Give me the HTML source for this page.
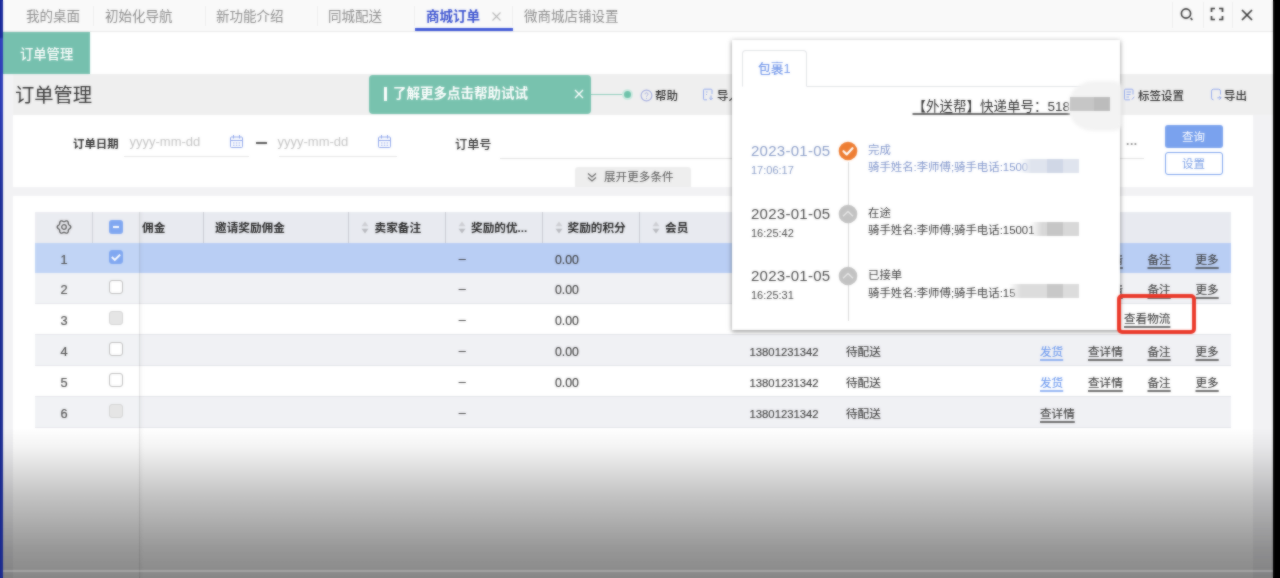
<!DOCTYPE html>
<html lang="zh-CN">
<head>
<meta charset="utf-8">
<title>订单管理</title>
<style>
*{box-sizing:border-box;margin:0;padding:0}
html,body{width:1280px;height:578px;overflow:hidden;background:#f2f2f4}
body{position:relative;font-family:"Liberation Sans","Noto Sans CJK SC",sans-serif;font-size:12px;color:#333}
#root{position:absolute;left:0;top:0;width:1280px;height:578px;overflow:hidden;will-change:transform}
#soft{position:absolute;left:0;top:0;width:1280px;height:578px;-webkit-backdrop-filter:blur(1px);backdrop-filter:blur(1px);opacity:.6;pointer-events:none}
#in{position:absolute;left:0;top:0;width:1280px;height:578px}
.abs{position:absolute}
.t{position:absolute;white-space:nowrap;line-height:16px;height:16px}
i{display:block}
#topbg{left:-20px;top:-20px;width:1320px;height:52px;background:#f9f9f9;border-bottom:1px solid #e9e9e9}
#topbar{left:0;top:0;width:1280px;height:32px}
#topbar .t{top:8.8px;font-size:13.5px;color:#8c8c8c}
.sep{position:absolute;top:6px;width:1px;height:20px;background:#ededed}
#row2{left:-20px;top:32px;width:1320px;height:42px;background:#fff}
#gtab{left:3px;top:32px;width:87px;height:42px;background:#76c0ae}
#titlebar{left:12.5px;top:74px;width:1290px;height:41px;background:#efefef}
.tb{font-size:11.5px;color:#2c2c2c;font-weight:500;top:87.5px}
#filter{left:13px;top:115px;width:1240px;height:72px;background:#fff}
#tpanel{left:13px;top:196px;width:1240px;height:402px;background:#fff}
#thead{left:35px;top:212px;width:1196px;height:31px;background:#e8eaf0}
.row{position:absolute;left:35px;width:1196px;height:30.8px;border-bottom:1px solid #e2e3e8}
.row .t{top:8.5px;font-size:11.6px;color:#3a3a3a;-webkit-text-stroke:.12px currentColor}
.row .n{font-size:12.8px;left:0;width:58px;text-align:center;color:#383838;top:8.7px;-webkit-text-stroke:.22px currentColor}
.row .num{font-size:12.3px}
.hd{position:absolute;top:219.5px;font-size:11.65px;font-weight:bold;color:#2a2a2a;white-space:nowrap;line-height:16px}
.vs{position:absolute;top:212px;width:1px;height:31px;background:#c9cbd3}
.lnk{text-decoration:underline;text-decoration-thickness:1.5px;text-underline-offset:2.5px;text-decoration-color:rgba(60,60,60,.75)}
.blue{color:#6b98ee !important;text-decoration-color:rgba(120,160,240,.8) !important}
.cb{position:absolute;left:74px;top:7px;width:14px;height:14px;border:1.2px solid #b4b4b4;border-radius:3px;background:#fff}
.cb.dis{background:#e2e2e2;border-color:#cfcfcf}
.cb.on{background:#6f9bf0;border-color:#6f9bf0}
#popup{left:732px;top:40px;width:388px;height:290px;background:#fff;box-shadow:0 1px 5px rgba(0,0,0,.36),0 2px 3px rgba(0,0,0,.14)}
.tl .d{font-size:15px;color:#555;left:751px;letter-spacing:.27px}
.tl .h{font-size:11px;color:#555;left:751px}
.tl .c{font-size:11.4px;color:#444;left:868px}
.blk{position:absolute;height:14px;filter:blur(.6px)}
</style>
</head>
<body>
<div id="root"><div id="in">
<div class="abs" id="topbg"></div>
<div class="abs" id="topbar">
  <span class="t" style="left:26px">我的桌面</span>
  <span class="t" style="left:105px">初始化导航</span>
  <span class="t" style="left:216px">新功能介绍</span>
  <span class="t" style="left:328px">同城配送</span>
  <span class="t" style="left:426px;color:#3a52d0;font-weight:bold">商城订单</span>
  <svg class="abs" style="left:491px;top:11px" width="11" height="11" viewBox="0 0 11 11"><path d="M1.5 1.5l8 8M9.5 1.5l-8 8" fill="none" stroke="#b8b8b8" stroke-width="1.1"/></svg>
  <span class="t" style="left:524px">微商城店铺设置</span>
  <i class="sep" style="left:93px"></i><i class="sep" style="left:205px"></i><i class="sep" style="left:317px"></i><i class="sep" style="left:414px"></i><i class="sep" style="left:512px"></i>
  <i class="abs" style="left:415px;top:28px;width:98px;height:3px;background:#3f58d8"></i>
  <i class="sep" style="left:1172px;top:2px;height:26px"></i><i class="sep" style="left:1203px;top:2px;height:26px"></i><i class="sep" style="left:1232px;top:2px;height:26px"></i>
  <svg class="abs" style="left:1178px;top:6px" width="18" height="18" viewBox="0 0 18 18"><circle cx="8" cy="7.5" r="4.6" fill="none" stroke="#3a3a3a" stroke-width="1.6"/><path d="M12.6 12.2l1.8 1.6" stroke="#3a3a3a" stroke-width="1.7" fill="none"/></svg>
  <svg class="abs" style="left:1209px;top:6px" width="16" height="16" viewBox="0 0 16 16"><path d="M2.5 6V2.5H6M10 2.5h3.5V6M13.5 10v3.5H10M6 13.500H2.500V10" fill="none" stroke="#3a3a3a" stroke-width="1.7"/></svg>
  <svg class="abs" style="left:1240px;top:7.500px" width="14" height="14" viewBox="0 0 14 14"><path d="M2 2l10 10M12 2L2 12" fill="none" stroke="#3a3a3a" stroke-width="1.7"/></svg>
</div>
<div class="abs" id="row2"></div>
<div class="abs" id="gtab"><span class="t" style="left:17px;top:14.500px;font-size:13.3px;color:#fff;font-weight:500">订单管理</span></div>
<div class="abs" id="titlebar"></div>
<span class="t" style="left:15px;top:83.700px;font-size:19.3px;line-height:24px;height:24px;color:#333">订单管理</span>
<div class="abs" style="left:369px;top:75px;width:222px;height:39px;background:#78c2ae;border-radius:4px">
  <i class="abs" style="left:15px;top:11.500px;width:3px;height:14px;background:#fff"></i>
  <span class="t" style="left:24px;top:11px;font-size:13.5px;color:#fff;font-weight:bold">了解更多点击帮助试试</span>
  <svg class="abs" style="left:205px;top:14px" width="10" height="10" viewBox="0 0 10 10"><path d="M1 1l8 8M9 1L1 9" fill="none" stroke="#fff" stroke-width="1.4"/></svg>
</div>
<i class="abs" style="left:591px;top:94px;width:32px;height:1px;background:#8fcdbb"></i>
<i class="abs" style="left:621.5px;top:89px;width:11px;height:11px;border-radius:50%;background:#cfeae2"></i>
<i class="abs" style="left:623.5px;top:91px;width:7px;height:7px;border-radius:50%;background:#6fc2aa"></i>
<div id="tbitems">
  <svg class="abs" style="left:639.500px;top:88.500px" width="13" height="13" viewBox="0 0 13 13"><circle cx="6.5" cy="6.5" r="5.400" fill="none" stroke="#a3acdf" stroke-width="1.100"/><path d="M5 5.300c0-2 3-2 3 0 0 1-1.500 1.200-1.500 2.400M6.500 8.900v.9" fill="none" stroke="#a3acdf" stroke-width="1"/></svg>
  <span class="t tb" style="left:655px">帮助</span>
  <svg class="abs" style="left:702px;top:88px" width="12" height="13" viewBox="0 0 12 13"><path d="M10 6V2.200a1 1 0 0 0-1-1H2.500a1 1 0 0 0-1 1v8.600a1 1 0 0 0 1 1H5" fill="none" stroke="#93a9ee" stroke-width="1"/><path d="M4 4h1.500M4 6.500h1M9 7.500v4M7.300 10l1.700 1.700 1.700-1.700" fill="none" stroke="#93a9ee" stroke-width="1"/></svg>
  <span class="t tb" style="left:717px">导入</span>
  <svg class="abs" style="left:1123px;top:88px" width="13" height="13" viewBox="0 0 13 13"><path d="M10 6.500V2.200a1 1 0 0 0-1-1H2.500a1 1 0 0 0-1 1v8.600a1 1 0 0 0 1 1H7" fill="none" stroke="#93a9ee" stroke-width="1"/><path d="M3.500 4h4.500M3.500 6.500h4M3.500 9h2.500M9 11.500l2.200-2.700" fill="none" stroke="#93a9ee" stroke-width="1"/></svg>
  <span class="t tb" style="left:1138px">标签设置</span>
  <svg class="abs" style="left:1210px;top:88px" width="13" height="13" viewBox="0 0 13 13"><path d="M3.500 11.800a2 2 0 0 1-2-2V3.200a2 2 0 0 1 2-2h5a2 2 0 0 1 2 2V6.500" fill="none" stroke="#93a9ee" stroke-width="1"/><path d="M7.300 9.800h3.700M9.300 8l1.800 1.800-1.800 1.800" fill="none" stroke="#93a9ee" stroke-width="1"/></svg>
  <span class="t tb" style="left:1224px">导出</span>
</div>
<div class="abs" id="filter"></div>
<span class="t" style="left:73px;top:136px;font-size:11.4px;font-weight:bold;color:#333">订单日期</span>
<span class="t" style="left:129.500px;top:134px;font-size:13px;color:#c4c4c4">yyyy-mm-dd</span>
<svg class="abs" style="left:228.500px;top:134px" width="15" height="15" viewBox="0 0 15 15"><rect x="1.5" y="3" width="12" height="10.5" rx="1" fill="none" stroke="#8ea6ea" stroke-width="1"/><path d="M4.500 1v3.500M10.500 1v3.500M1.500 6.500h12M4 9h1.500M6.800 9h1.500M9.600 9h1.500M4 11.200h1.500M6.800 11.200h1.500M9.600 11.200h1.500" fill="none" stroke="#8ea6ea" stroke-width="1"/></svg>
<i class="abs" style="left:124px;top:156px;width:125px;height:1px;background:#e6e6e6"></i>
<i class="abs" style="left:256px;top:142px;width:11px;height:2px;background:#555"></i>
<span class="t" style="left:277.500px;top:134px;font-size:13px;color:#c4c4c4">yyyy-mm-dd</span>
<svg class="abs" style="left:377px;top:134px" width="15" height="15" viewBox="0 0 15 15"><rect x="1.5" y="3" width="12" height="10.5" rx="1" fill="none" stroke="#8ea6ea" stroke-width="1"/><path d="M4.500 1v3.500M10.500 1v3.500M1.500 6.500h12M4 9h1.500M6.800 9h1.500M9.600 9h1.500M4 11.200h1.500M6.800 11.200h1.500M9.600 11.200h1.500" fill="none" stroke="#8ea6ea" stroke-width="1"/></svg>
<i class="abs" style="left:279px;top:156px;width:118px;height:1px;background:#e6e6e6"></i>
<span class="t" style="left:455px;top:136.500px;font-size:12.2px;font-weight:500;color:#333">订单号</span>
<i class="abs" style="left:500px;top:158px;width:644px;height:1px;background:#e0e0e0"></i>
<span class="t" style="left:1126px;top:132.500px;font-size:12px;color:#8a8a8a;letter-spacing:.6px;font-weight:bold">...</span>
<div class="abs" style="left:575px;top:167px;width:116px;height:20px;background:#eeeeee;border-radius:3px 3px 0 0">
  <svg class="abs" style="left:11px;top:4px" width="12" height="12" viewBox="0 0 12 12"><path d="M2 2.500l4 3.500 4-3.500M2 6.500l4 3.500 4-3.500" fill="none" stroke="#666" stroke-width="1.1"/></svg>
  <span class="t" style="left:29px;top:2px;font-size:11.6px;color:#555">展开更多条件</span>
</div>
<div class="abs" style="left:1164.500px;top:124.500px;width:58px;height:23px;background:#7aa2ee;border-radius:3px"><span class="t" style="left:0;width:58px;text-align:center;top:4.500px;font-size:11.5px;color:#fff">查询</span></div>
<div class="abs" style="left:1164.500px;top:151.500px;width:58px;height:23px;background:#fff;border:1px solid #7aa2ee;border-radius:3px"><span class="t" style="left:-1px;width:58px;text-align:center;top:3.500px;font-size:11.5px;color:#7a9fe6">设置</span></div>
<div class="abs" id="tpanel"></div>
<div class="abs" id="thead"></div>
<i class="vs" style="left:92px"></i><i class="vs" style="left:203px"></i><i class="vs" style="left:348px"></i><i class="vs" style="left:445px"></i><i class="vs" style="left:542px"></i><i class="vs" style="left:639px"></i>
<svg class="abs" style="left:55.500px;top:219px" width="16" height="16" viewBox="0 0 16 16" overflow="visible"><path d="M14.75 8.00L14.62 8.59L14.28 9.13L13.80 9.58L13.29 9.96L12.85 10.31L12.55 10.68L12.38 11.13L12.31 11.69L12.24 12.33L12.10 12.98L11.81 13.56L11.38 13.96L10.81 14.15L10.18 14.11L9.55 13.91L8.98 13.65L8.47 13.44L8.00 13.36L7.53 13.44L7.02 13.65L6.45 13.91L5.82 14.11L5.19 14.15L4.63 13.96L4.19 13.56L3.90 12.98L3.76 12.33L3.69 11.69L3.62 11.13L3.45 10.68L3.15 10.31L2.71 9.96L2.20 9.58L1.72 9.13L1.38 8.59L1.25 8.00L1.38 7.41L1.72 6.87L2.20 6.42L2.71 6.04L3.15 5.69L3.45 5.32L3.62 4.87L3.69 4.31L3.76 3.67L3.90 3.02L4.19 2.44L4.62 2.04L5.19 1.85L5.82 1.89L6.45 2.09L7.02 2.35L7.53 2.56L8.00 2.64L8.47 2.56L8.98 2.35L9.55 2.09L10.18 1.89L10.81 1.85L11.37 2.04L11.81 2.44L12.10 3.02L12.24 3.67L12.31 4.31L12.38 4.87L12.55 5.32L12.85 5.69L13.29 6.04L13.80 6.42L14.28 6.87L14.62 7.41Z" fill="none" stroke="#444" stroke-width="1.400" stroke-linejoin="round"/><circle cx="8" cy="8" r="2.300" fill="none" stroke="#444" stroke-width="1.300"/></svg>
<div class="abs" style="left:109px;top:220px;width:13.5px;height:13.5px;background:#6f9bf0;border-radius:3px"><i class="abs" style="left:3.500px;top:6px;width:6.5px;height:1.8px;background:#fff"></i></div>
<span class="hd" style="left:142px">佣金</span><span class="hd" style="left:215px">邀请奖励佣金</span><svg class="abs" style="left:360.5px;top:221px" width="8" height="13" viewBox="0 0 8 13"><path d="M4 .5L7.500 5.300H.5z" fill="#cdced3"/><path d="M4 12.500L7.500 7.700H.5z" fill="#b9babf"/></svg><span class="hd" style="left:374.500px">卖家备注</span><svg class="abs" style="left:457.5px;top:221px" width="8" height="13" viewBox="0 0 8 13"><path d="M4 .5L7.500 5.300H.5z" fill="#cdced3"/><path d="M4 12.500L7.500 7.700H.5z" fill="#b9babf"/></svg><span class="hd" style="left:471px">奖励的优...</span><svg class="abs" style="left:554.5px;top:221px" width="8" height="13" viewBox="0 0 8 13"><path d="M4 .5L7.500 5.300H.5z" fill="#cdced3"/><path d="M4 12.500L7.500 7.700H.5z" fill="#b9babf"/></svg><span class="hd" style="left:567.500px">奖励的积分</span><svg class="abs" style="left:651.5px;top:221px" width="8" height="13" viewBox="0 0 8 13"><path d="M4 .5L7.500 5.300H.5z" fill="#cdced3"/><path d="M4 12.500L7.500 7.700H.5z" fill="#b9babf"/></svg><span class="hd" style="left:665px">会员</span>
<div class="row" style="top:243.0px;height:30.0px;background:#b9cef4;border-bottom-color:#b9cef4"><span class="t n">1</span><i class="cb on"><svg class="abs" style="left:0;top:0" width="12" height="12" viewBox="0 0 12 12"><path d="M1.800 6l3 3 5.400-5.400" fill="none" stroke="#fff" stroke-width="1.9"/></svg></i><span class="t" style="left:423.700px;top:7.600px;font-size:12.5px">–</span><span class="t num" style="left:520px">0.00</span><span class="t lnk" style="left:1053px">查详情</span><span class="t lnk" style="left:1112.500px">备注</span><span class="t lnk" style="left:1160.500px">更多</span></div>
<div class="row" style="top:273.0px;height:31.0px;background:#f0f1f4;border-bottom-color:#e2e3e8"><span class="t n">2</span><i class="cb"></i><span class="t" style="left:423.700px;top:7.600px;font-size:12.5px">–</span><span class="t num" style="left:520px">0.00</span><span class="t lnk" style="left:1053px">查详情</span><span class="t lnk" style="left:1112.500px">备注</span><span class="t lnk" style="left:1160.500px">更多</span></div>
<div class="row" style="top:304.0px;height:31.0px;background:#ffffff;border-bottom-color:#e2e3e8"><span class="t n">3</span><i class="cb dis"></i><span class="t" style="left:423.700px;top:7.600px;font-size:12.5px">–</span><span class="t num" style="left:520px">0.00</span><span class="t lnk" style="left:1089px;top:6.500px">查看物流</span></div>
<div class="row" style="top:335.0px;height:31.0px;background:#f0f1f4;border-bottom-color:#e2e3e8"><span class="t n">4</span><i class="cb"></i><span class="t" style="left:423.700px;top:7.600px;font-size:12.5px">–</span><span class="t num" style="left:520px">0.00</span><span class="t" style="left:714.500px;font-size:11.3px">13801231342</span><span class="t" style="left:811px">待配送</span><span class="t lnk blue" style="left:1005px">发货</span><span class="t lnk" style="left:1053px">查详情</span><span class="t lnk" style="left:1112.500px">备注</span><span class="t lnk" style="left:1160.500px">更多</span></div>
<div class="row" style="top:366.0px;height:31.0px;background:#ffffff;border-bottom-color:#e2e3e8"><span class="t n">5</span><i class="cb"></i><span class="t" style="left:423.700px;top:7.600px;font-size:12.5px">–</span><span class="t num" style="left:520px">0.00</span><span class="t" style="left:714.500px;font-size:11.3px">13801231342</span><span class="t" style="left:811px">待配送</span><span class="t lnk blue" style="left:1005px">发货</span><span class="t lnk" style="left:1053px">查详情</span><span class="t lnk" style="left:1112.500px">备注</span><span class="t lnk" style="left:1160.500px">更多</span></div>
<div class="row" style="top:397.0px;height:31.0px;background:#f0f1f4;border-bottom-color:#e2e3e8"><span class="t n">6</span><i class="cb dis"></i><span class="t" style="left:423.700px;top:7.600px;font-size:12.5px">–</span><span class="t" style="left:714.500px;font-size:11.3px">13801231342</span><span class="t" style="left:811px">待配送</span><span class="t lnk" style="left:1005px">查详情</span></div>
<i class="abs" style="left:35px;top:212px;width:104.500px;height:216px;background:rgba(255,255,255,.12)"></i>
<i class="abs" style="left:139.500px;top:212px;width:4px;height:386px;background:linear-gradient(to right,rgba(0,0,0,.03),rgba(0,0,0,0))"></i>
<i class="abs" style="left:139px;top:212px;width:1px;height:386px;background:rgba(0,0,0,.1)"></i>
<div class="abs" id="popup"></div>
<i class="abs" style="left:742px;top:86px;width:339px;height:1.300px;background:#e2e3e6"></i>
<div class="abs" style="left:742px;top:50px;width:64.500px;height:37px;border:1px solid #e2e3e6;border-bottom:1px solid #fff;border-radius:4px 4px 0 0;background:#fff"><span class="t" style="left:-1px;width:64.500px;text-align:center;top:9.500px;font-size:12.8px;color:#7599ea;font-weight:500">包裹1</span></div>
<span class="t" style="left:912.500px;top:99.300px;font-size:13.5px;color:#333;text-decoration:underline;text-decoration-thickness:1.5px;text-decoration-color:rgba(40,40,40,.7);text-underline-offset:2px;white-space:pre">【外送帮】快递单号：518</span>
<i class="abs" style="left:1068px;top:81px;width:54px;height:50px;border-radius:25px 8px 8px 25px;background:#f3f3f3;filter:blur(1.5px)"></i>
<i class="blk" style="left:1070px;top:97px;width:40px;background:#c6c6c6"></i>
<i class="blk" style="left:1094px;top:97px;width:16px;background:#bcbcbc"></i>
<i class="abs" style="left:848px;top:162px;width:1px;height:159px;background:#d9d9d9"></i>
<div class="tl"><span class="t d" style="top:140.9px;color:#8a9dc8;line-height:20px;height:20px">2023-01-05</span><span class="t h" style="top:161.7px;color:#8a9dc8">17:06:17</span><svg class="abs" style="left:838.0px;top:140.5px" width="20" height="20" viewBox="0 0 20 20"><circle cx="10" cy="10" r="9.300" fill="#ee7d32"/><path d="M5.500 10.200l3.200 3.200 5.800-6.200" fill="none" stroke="#fff" stroke-width="2.200" stroke-linecap="round" stroke-linejoin="round"/></svg><span class="t c" style="top:141.5px;color:#8196cc">完成</span><span class="t c" style="top:159.0px;color:#8196cc">骑手姓名:李师傅;骑手电话:1500</span><i class="blk" style="left:1019px;top:158.5px;width:60px;background:linear-gradient(to right,rgba(255,255,255,0),#dfe4ee 12px,#dfe4ee 20px,#dfe4ee 100%)"></i><i class="blk" style="left:1047px;top:158.5px;width:16px;background:#d0d7e6"></i></div>
<div class="tl"><span class="t d" style="top:203.9px;color:#4a4a4a;line-height:20px;height:20px">2023-01-05</span><span class="t h" style="top:224.7px;color:#4a4a4a">16:25:42</span><svg class="abs" style="left:838.0px;top:203.5px" width="20" height="20" viewBox="0 0 20 20"><circle cx="10" cy="10" r="9.300" fill="#c2c2c2"/><path d="M5 12.200l5-4.700 5 4.700" fill="none" stroke="#e6e6e6" stroke-width="1.400"/></svg><span class="t c" style="top:204.5px;color:#3c3c3c">在途</span><span class="t c" style="top:222.0px;color:#3c3c3c">骑手姓名:李师傅;骑手电话:15001</span><i class="blk" style="left:1030px;top:221.5px;width:49px;background:linear-gradient(to right,rgba(255,255,255,0),#d8d8d8 12px,#d8d8d8 20px,#d8d8d8 100%)"></i><i class="blk" style="left:1047px;top:221.5px;width:16px;background:#c6c6c6"></i></div>
<div class="tl"><span class="t d" style="top:266.4px;color:#4a4a4a;line-height:20px;height:20px">2023-01-05</span><span class="t h" style="top:287.2px;color:#4a4a4a">16:25:31</span><svg class="abs" style="left:838.0px;top:266.0px" width="20" height="20" viewBox="0 0 20 20"><circle cx="10" cy="10" r="9.300" fill="#c2c2c2"/><path d="M5 12.200l5-4.700 5 4.700" fill="none" stroke="#e6e6e6" stroke-width="1.400"/></svg><span class="t c" style="top:267.0px;color:#3c3c3c">已接单</span><span class="t c" style="top:284.5px;color:#3c3c3c">骑手姓名:李师傅;骑手电话:15</span><i class="blk" style="left:1009px;top:284.0px;width:70px;background:linear-gradient(to right,rgba(255,255,255,0),#dcdcdc 12px,#dcdcdc 20px,#dcdcdc 100%)"></i><i class="blk" style="left:1047px;top:284.0px;width:16px;background:#c8c8c8"></i></div>
<i class="abs" style="left:1117.300px;top:294.400px;width:78.700px;height:40px;border:4px solid #ea3829;border-radius:5px"></i>
<i class="abs" style="left:-20px;top:428px;width:1320px;height:150px;background:linear-gradient(to bottom,rgba(0,0,0,0) 0,rgba(0,0,0,.045) 12%,rgba(0,0,0,.235) 45%,rgba(0,0,0,.405) 80%,rgba(0,0,0,.47) 100%)"></i>
<i class="abs" style="left:-20px;top:578px;width:1320px;height:20px;background:rgba(0,0,0,.47)"></i>
<i class="abs" style="left:-20px;top:569.500px;width:1320px;height:2px;background:rgba(255,255,255,.22)"></i>
<i class="abs" style="left:-20px;top:-20px;width:22.700px;height:618px;background:linear-gradient(to bottom,#1b2b9c 0,#1b2b9c 57px,#3142bd 59px,#2c3cb4 130px,#1e2f98 220px,#1c2b8e 100%)"></i>
<i class="abs" style="left:1273px;top:-20px;width:27px;height:618px;background:#000"></i>
</div></div>
<div id="soft"></div>
</body>
</html>
